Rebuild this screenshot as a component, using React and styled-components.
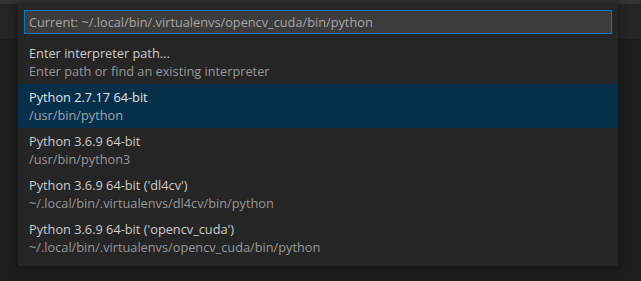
import React from 'react'
import styled, { createGlobalStyle } from 'styled-components'

const GlobalStyle = createGlobalStyle`
  html, body {
    margin: 0;
    padding: 0;
    background: #1e1e1e;
    overflow: hidden;
  }
  body {
    font-family: "Open Sans", "Noto Sans", sans-serif;
  }
`

const Window = styled.div`
  width: 641px;
  height: 281px;
  display: flex;
  flex-direction: column;
  background: #1e1e1e;
`

const TitleStrip = styled.div`
  height: 4px;
  background: #333333;
`

const Workspace = styled.div`
  flex: 1;
  position: relative;
  display: flex;
`

const SidePane = styled.div`
  width: 18px;
  display: flex;
  flex-direction: column;
  overflow: hidden;
  background: #1e1e1e;
`

const PaneHeader = styled.div`
  height: 35px;
  background: #252526;
`

const SideText = styled.div`
  margin: 3px 0 0 -8px;
  font-size: 13px;
  line-height: 18px;
  color: #cccccc;
`

const Editor = styled.div`
  flex: 1;
  display: flex;
  flex-direction: column;
`

const TabStrip = styled.div`
  height: 35px;
  background: #252526;
`

const QuickPick = styled.div`
  position: absolute;
  top: 0;
  left: 18px;
  width: 600px;
  padding: 6px 0 6px;
  background: #252526;
  box-shadow: 0 0 8px 2px rgba(0, 0, 0, 0.36);
  display: flex;
  flex-direction: column;
`

const InputWrap = styled.div`
  padding: 0 6px;
`

const Input = styled.div`
  height: 22px;
  border: 1px solid #007acc;
  background: #3c3c3c;
  color: #a6a6a6;
  font-size: 12.75px;
  line-height: 23px;
  padding: 0 4px;
  white-space: nowrap;
  overflow: hidden;
`

const List = styled.div`
  margin-top: 6px;
  display: flex;
  flex-direction: column;
`

const Item = styled.div`
  height: 44px;
  box-sizing: border-box;
  padding: 4px 11px 0;
  background: ${p => (p.$selected ? '#062f4a' : 'transparent')};
  font-size: 12.75px;
  line-height: 18px;
  white-space: nowrap;
`

const Label = styled.div`
  color: ${p => (p.$selected ? '#e4e4e4' : '#cccccc')};
`

const Detail = styled.div`
  color: ${p => (p.$selected ? '#9fa7ae' : '#989898')};
`

const items = [
  { label: 'Enter interpreter path...', detail: 'Enter path or find an existing interpreter' },
  { label: 'Python 2.7.17 64-bit', detail: '/usr/bin/python', selected: true },
  { label: 'Python 3.6.9 64-bit', detail: '/usr/bin/python3' },
  { label: "Python 3.6.9 64-bit ('dl4cv')", detail: '~/.local/bin/.virtualenvs/dl4cv/bin/python' },
  { label: "Python 3.6.9 64-bit ('opencv_cuda')", detail: '~/.local/bin/.virtualenvs/opencv_cuda/bin/python' },
]

const App = () => {
  return (
    <Window>
      <GlobalStyle />
      <TitleStrip />
      <Workspace>
        <SidePane>
          <PaneHeader />
          <SideText>o</SideText>
        </SidePane>
        <Editor>
          <TabStrip />
        </Editor>
        <QuickPick>
          <InputWrap>
            <Input>Current: ~/.local/bin/.virtualenvs/opencv_cuda/bin/python</Input>
          </InputWrap>
          <List>
            {items.map(it => (
              <Item key={it.label} $selected={it.selected}>
                <Label $selected={it.selected}>{it.label}</Label>
                <Detail $selected={it.selected}>{it.detail}</Detail>
              </Item>
            ))}
          </List>
        </QuickPick>
      </Workspace>
    </Window>
  )
}

export default App
